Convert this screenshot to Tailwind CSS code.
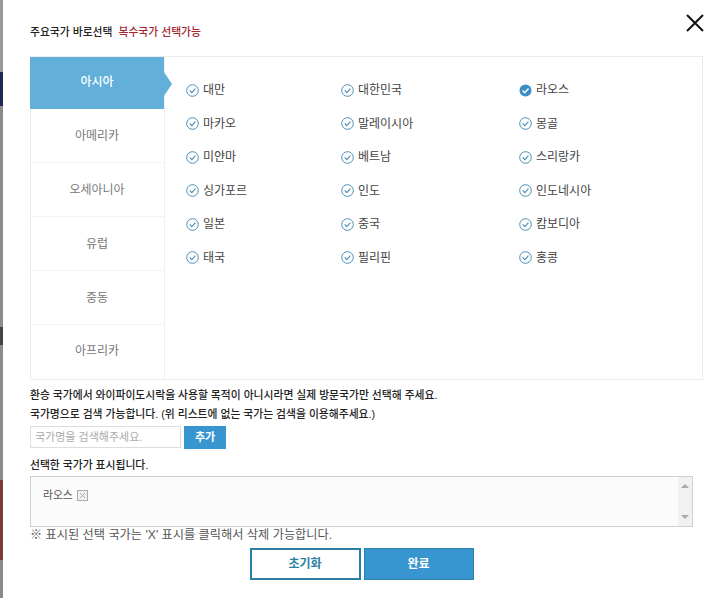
<!DOCTYPE html>
<html lang="ko">
<head>
  <meta charset="UTF-8" />
  <title>국가 선택</title>
  <script src="https://cdn.jsdelivr.net/npm/@tailwindcss/browser@4"></script>
</head>
<body class="bg-white font-['Liberation_Sans','Noto_Sans_CJK_KR',sans-serif] text-[#333]">
  <div class="flex h-[598px] w-[720px] overflow-hidden">
    <!-- page behind the popup -->
    <div class="flex w-[3px] shrink-0 flex-col bg-[#8a8a8a]">
      <div class="h-[72px] bg-[#9a9a9a]"></div>
      <div class="h-[34px] bg-[#1d2a56]"></div>
      <div class="h-[221px] bg-[#8c8c8c]"></div>
      <div class="h-[18px] bg-[#444]"></div>
      <div class="h-[135px] bg-[#8c8c8c]"></div>
      <div class="h-[80px] bg-[#7d3a38]"></div>
    </div>

    <!-- Popup -->
    <div class="relative flex-1 pl-[27px] pr-[28px] pt-[24px]">
      <button class="absolute left-[683px] top-[14px]">
        <svg class="h-[18px] w-[18px]" viewBox="0 0 18 18" fill="none" stroke="#111" stroke-width="2"><path d="M1 1l16 16M17 1L1 17" /></svg>
      </button>

      <h2 class="flex h-[16px] items-center gap-[6px] text-[10.8px] font-medium leading-none text-[#222]">
        주요국가 바로선택 <span class="text-[#a3262e]">복수국가 선택가능</span>
      </h2>

      <!-- Country picker -->
      <div class="mt-[16px] -mr-[10px] flex h-[324px] border border-[#ececec]">
        <ul class="-ml-px w-[135px] shrink-0 border-r border-[#f0f0f0] text-center text-[12px] text-[#777]">
          <li class="relative flex h-[52px] items-center justify-center bg-[#62b0da] pb-[2px] font-medium text-white">
            아시아
            <span class="absolute left-full top-[15px] h-0 w-0 border-y-[12px] border-l-[8px] border-y-transparent border-l-[#62b0da]"></span>
          </li>
          <li class="flex h-[54px] items-center justify-center border-b border-[#f4f4f4]">아메리카</li>
          <li class="flex h-[54px] items-center justify-center border-b border-[#f4f4f4]">오세아니아</li>
          <li class="flex h-[54px] items-center justify-center border-b border-[#f4f4f4]">유럽</li>
          <li class="flex h-[54px] items-center justify-center border-b border-[#f4f4f4]">중동</li>
          <li class="flex h-[54px] items-center justify-center pb-[2px]">아프리카</li>
        </ul>

        <div class="grid h-max flex-1 grid-cols-[155px_178px_1fr] gap-y-[11.6px] pl-[21px] pt-[22px] text-[12px] leading-[22px] text-[#444]">
          <label class="flex items-center gap-[4px]"><svg class="h-[13px] w-[13px]" viewBox="0 0 13 13" fill="none" stroke="#4a8fb5"><circle cx="6.5" cy="6.5" r="5.8" /><path d="M3.7 6.4l2.1 2.2 3.6-3.9" stroke-width="1.1" /></svg>대만</label>
          <label class="flex items-center gap-[4px]"><svg class="h-[13px] w-[13px]" viewBox="0 0 13 13" fill="none" stroke="#4a8fb5"><circle cx="6.5" cy="6.5" r="5.8" /><path d="M3.7 6.4l2.1 2.2 3.6-3.9" stroke-width="1.1" /></svg>대한민국</label>
          <label class="flex items-center gap-[4px]"><svg class="h-[13px] w-[13px]" viewBox="0 0 13 13" fill="none"><circle cx="6.5" cy="6.5" r="6" fill="#3a8fc4" /><path d="M3.5 6.4l2.2 2.3 3.8-4.1" stroke="#fff" stroke-width="1.4" /></svg>라오스</label>
          <label class="flex items-center gap-[4px]"><svg class="h-[13px] w-[13px]" viewBox="0 0 13 13" fill="none" stroke="#4a8fb5"><circle cx="6.5" cy="6.5" r="5.8" /><path d="M3.7 6.4l2.1 2.2 3.6-3.9" stroke-width="1.1" /></svg>마카오</label>
          <label class="flex items-center gap-[4px]"><svg class="h-[13px] w-[13px]" viewBox="0 0 13 13" fill="none" stroke="#4a8fb5"><circle cx="6.5" cy="6.5" r="5.8" /><path d="M3.7 6.4l2.1 2.2 3.6-3.9" stroke-width="1.1" /></svg>말레이시아</label>
          <label class="flex items-center gap-[4px]"><svg class="h-[13px] w-[13px]" viewBox="0 0 13 13" fill="none" stroke="#4a8fb5"><circle cx="6.5" cy="6.5" r="5.8" /><path d="M3.7 6.4l2.1 2.2 3.6-3.9" stroke-width="1.1" /></svg>몽골</label>
          <label class="flex items-center gap-[4px]"><svg class="h-[13px] w-[13px]" viewBox="0 0 13 13" fill="none" stroke="#4a8fb5"><circle cx="6.5" cy="6.5" r="5.8" /><path d="M3.7 6.4l2.1 2.2 3.6-3.9" stroke-width="1.1" /></svg>미얀마</label>
          <label class="flex items-center gap-[4px]"><svg class="h-[13px] w-[13px]" viewBox="0 0 13 13" fill="none" stroke="#4a8fb5"><circle cx="6.5" cy="6.5" r="5.8" /><path d="M3.7 6.4l2.1 2.2 3.6-3.9" stroke-width="1.1" /></svg>베트남</label>
          <label class="flex items-center gap-[4px]"><svg class="h-[13px] w-[13px]" viewBox="0 0 13 13" fill="none" stroke="#4a8fb5"><circle cx="6.5" cy="6.5" r="5.8" /><path d="M3.7 6.4l2.1 2.2 3.6-3.9" stroke-width="1.1" /></svg>스리랑카</label>
          <label class="flex items-center gap-[4px]"><svg class="h-[13px] w-[13px]" viewBox="0 0 13 13" fill="none" stroke="#4a8fb5"><circle cx="6.5" cy="6.5" r="5.8" /><path d="M3.7 6.4l2.1 2.2 3.6-3.9" stroke-width="1.1" /></svg>싱가포르</label>
          <label class="flex items-center gap-[4px]"><svg class="h-[13px] w-[13px]" viewBox="0 0 13 13" fill="none" stroke="#4a8fb5"><circle cx="6.5" cy="6.5" r="5.8" /><path d="M3.7 6.4l2.1 2.2 3.6-3.9" stroke-width="1.1" /></svg>인도</label>
          <label class="flex items-center gap-[4px]"><svg class="h-[13px] w-[13px]" viewBox="0 0 13 13" fill="none" stroke="#4a8fb5"><circle cx="6.5" cy="6.5" r="5.8" /><path d="M3.7 6.4l2.1 2.2 3.6-3.9" stroke-width="1.1" /></svg>인도네시아</label>
          <label class="flex items-center gap-[4px]"><svg class="h-[13px] w-[13px]" viewBox="0 0 13 13" fill="none" stroke="#4a8fb5"><circle cx="6.5" cy="6.5" r="5.8" /><path d="M3.7 6.4l2.1 2.2 3.6-3.9" stroke-width="1.1" /></svg>일본</label>
          <label class="flex items-center gap-[4px]"><svg class="h-[13px] w-[13px]" viewBox="0 0 13 13" fill="none" stroke="#4a8fb5"><circle cx="6.5" cy="6.5" r="5.8" /><path d="M3.7 6.4l2.1 2.2 3.6-3.9" stroke-width="1.1" /></svg>중국</label>
          <label class="flex items-center gap-[4px]"><svg class="h-[13px] w-[13px]" viewBox="0 0 13 13" fill="none" stroke="#4a8fb5"><circle cx="6.5" cy="6.5" r="5.8" /><path d="M3.7 6.4l2.1 2.2 3.6-3.9" stroke-width="1.1" /></svg>캄보디아</label>
          <label class="flex items-center gap-[4px]"><svg class="h-[13px] w-[13px]" viewBox="0 0 13 13" fill="none" stroke="#4a8fb5"><circle cx="6.5" cy="6.5" r="5.8" /><path d="M3.7 6.4l2.1 2.2 3.6-3.9" stroke-width="1.1" /></svg>태국</label>
          <label class="flex items-center gap-[4px]"><svg class="h-[13px] w-[13px]" viewBox="0 0 13 13" fill="none" stroke="#4a8fb5"><circle cx="6.5" cy="6.5" r="5.8" /><path d="M3.7 6.4l2.1 2.2 3.6-3.9" stroke-width="1.1" /></svg>필리핀</label>
          <label class="flex items-center gap-[4px]"><svg class="h-[13px] w-[13px]" viewBox="0 0 13 13" fill="none" stroke="#4a8fb5"><circle cx="6.5" cy="6.5" r="5.8" /><path d="M3.7 6.4l2.1 2.2 3.6-3.9" stroke-width="1.1" /></svg>홍콩</label>
        </div>
      </div>

      <!-- Notes and search -->
      <p class="mt-[6px] text-[10.8px] font-medium leading-[19px] text-[#222]">환승 국가에서 와이파이도시락을 사용할 목적이 아니시라면 실제 방문국가만 선택해 주세요.</p>
      <p class="text-[10.8px] font-medium leading-[19px] text-[#222]">국가명으로 검색 가능합니다. (위 리스트에 없는 국가는 검색을 이용해주세요.)</p>

      <div class="mt-[2px] flex gap-[3px]">
        <input class="h-[22px] w-[151px] border border-[#ddd] px-[4px] text-[11px] placeholder:text-[#aaa]" placeholder="국가명을 검색해주세요." />
        <button class="h-[23px] w-[42px] bg-[#3795cf] text-[11px] font-bold text-white">추가</button>
      </div>

      <p class="mt-[7px] text-[10.8px] font-medium leading-[18px] text-[#222]">선택한 국가가 표시됩니다.</p>

      <div class="relative mt-[2px] h-[51px] w-[663px] border border-[#d0d0d0] bg-[#fbfbfb] pl-[12px] pt-[10px] text-[10.8px] leading-[16px] text-[#555]">
        <span class="flex items-center gap-[4px]">라오스
          <svg class="h-[11px] w-[11px]" viewBox="0 0 11 11" fill="#f1f1f1" stroke="#aaa"><rect x=".5" y=".5" width="10" height="10" /><path d="M3 3l5 5M8 3l-5 5" /></svg>
        </span>
        <div class="absolute inset-y-0 right-0 flex w-[14px] flex-col items-center justify-between bg-[#f1f1f1] py-[7px]">
          <span class="h-0 w-0 border-x-[4px] border-b-[4px] border-x-transparent border-b-[#aaa]"></span>
          <span class="h-0 w-0 border-x-[4px] border-t-[4px] border-x-transparent border-t-[#aaa]"></span>
        </div>
      </div>

      <p class="text-[12.2px] leading-[16px] text-[#555]">※ 표시된 선택 국가는 'X' 표시를 클릭해서 삭제 가능합니다.</p>

      <div class="mt-[5px] flex justify-center gap-[3px]">
        <button class="h-[32px] w-[111px] border-2 border-[#2a7fa5] text-[12px] font-bold text-[#2a7fa5]">초기화</button>
        <button class="h-[32px] w-[110px] border border-[#2a7fa5] bg-[#3795cf] text-[12px] font-bold text-white">완료</button>
      </div>
    </div>
  </div>
</body>
</html>
